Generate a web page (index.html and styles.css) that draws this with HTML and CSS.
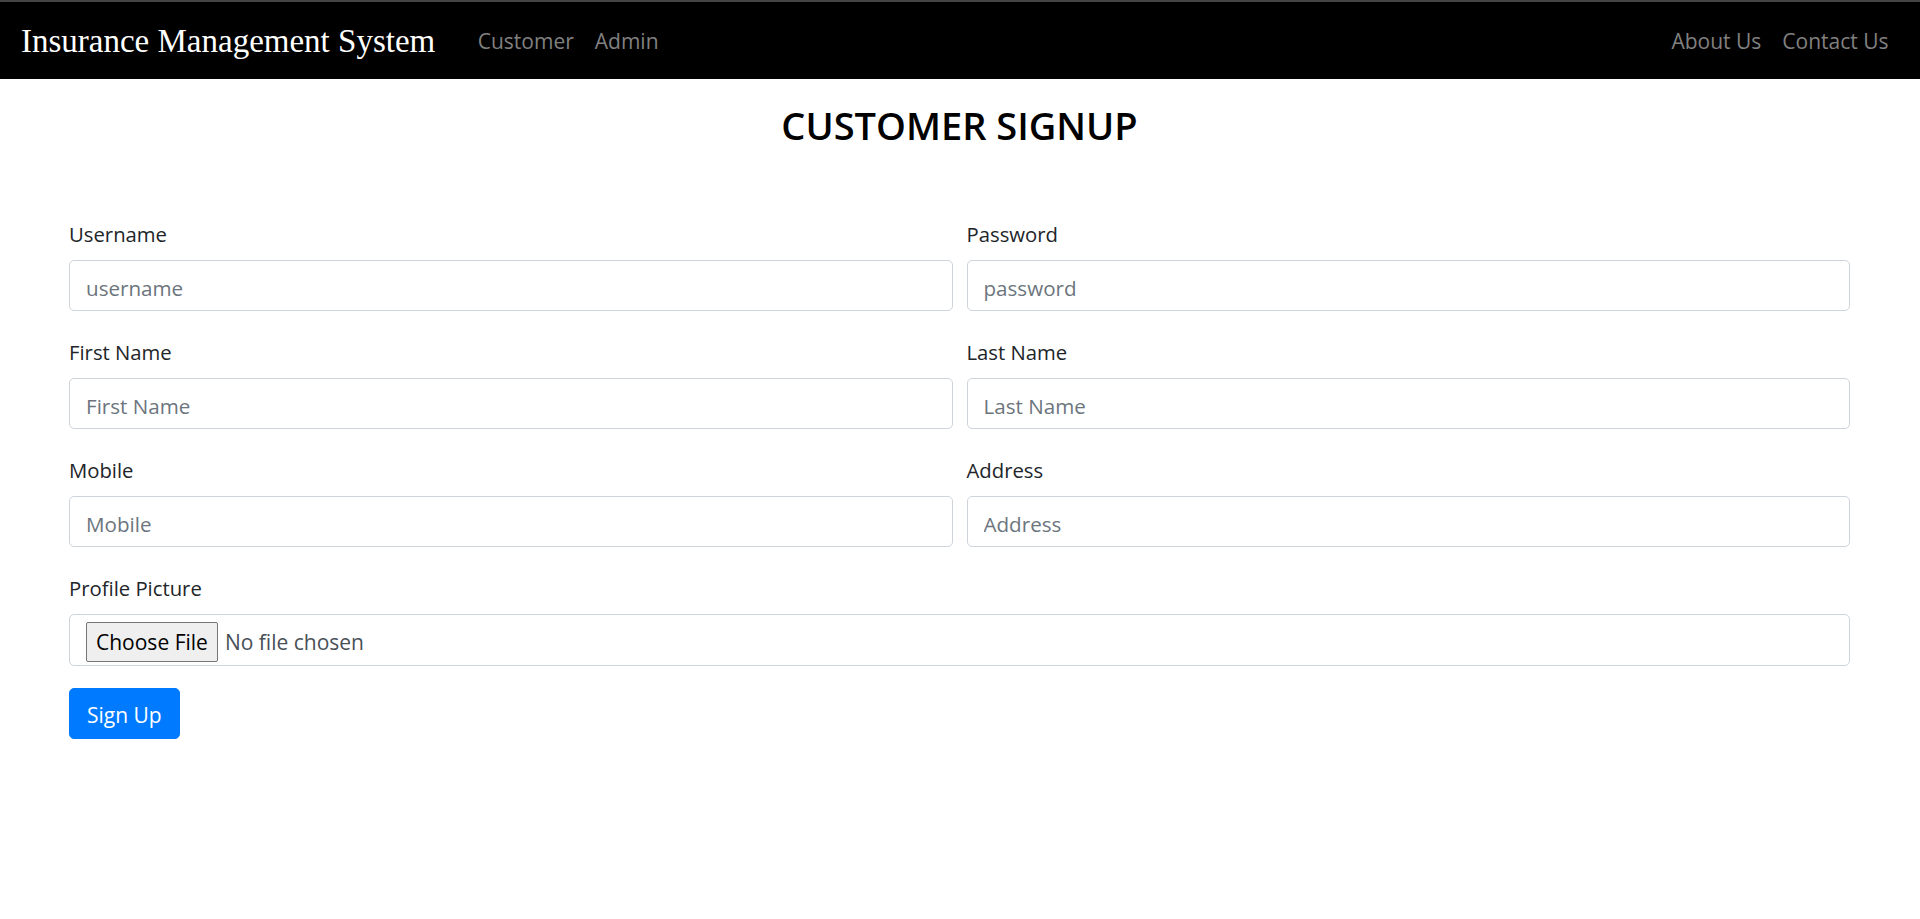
FILE: index.html
```html
<!DOCTYPE html>
<html lang="en">
<head>
<meta charset="utf-8">
<title>Customer Signup - Insurance Management System</title>
<link rel="stylesheet" href="styles.css">
</head>
<body>
<nav class="navbar">
  <a class="brand" href="#">Insurance Management System</a>
  <ul class="nav">
    <li><a class="nav-link" href="#">Customer</a></li>
    <li><a class="nav-link" href="#">Admin</a></li>
  </ul>
  <ul class="nav nav-right">
    <li><a class="nav-link" href="#">About Us</a></li>
    <li><a class="nav-link" href="#">Contact Us</a></li>
  </ul>
</nav>
<main class="page">
  <h3 class="title">CUSTOMER SIGNUP</h3>
  <form class="signup-form">
    <div class="form-row">
      <div class="form-group">
        <label for="username">Username</label>
        <input class="form-control" id="username" type="text" placeholder="username">
      </div>
      <div class="form-group">
        <label for="password">Password</label>
        <input class="form-control" id="password" type="password" placeholder="password">
      </div>
    </div>
    <div class="form-row">
      <div class="form-group">
        <label for="first_name">First Name</label>
        <input class="form-control" id="first_name" type="text" placeholder="First Name">
      </div>
      <div class="form-group">
        <label for="last_name">Last Name</label>
        <input class="form-control" id="last_name" type="text" placeholder="Last Name">
      </div>
    </div>
    <div class="form-row">
      <div class="form-group">
        <label for="mobile">Mobile</label>
        <input class="form-control" id="mobile" type="text" placeholder="Mobile">
      </div>
      <div class="form-group">
        <label for="address">Address</label>
        <input class="form-control" id="address" type="text" placeholder="Address">
      </div>
    </div>
    <div class="form-group form-group-last">
      <label for="profile_pic">Profile Picture</label>
      <input class="form-control file-control" id="profile_pic" type="file">
    </div>
    <button class="btn-primary" type="submit">Sign Up</button>
  </form>
</main>
</body>
</html>
```

FILE: styles.css
```css
* {
  box-sizing: border-box;
}

html, body {
  margin: 0;
  padding: 0;
  background: #fff;
}

body {
  font-family: "Open Sans", "Noto Sans", "Liberation Sans", sans-serif;
  font-size: 20px;
  line-height: 32px;
  color: #212529;
}

/* Navbar */
.navbar {
  display: flex;
  align-items: center;
  height: 79px;
  border-top: 2px solid #454545;
  background: #000;
  padding: 0 21px 0 21px;
}

.brand {
  font-family: "Liberation Serif", "Times New Roman", serif;
  font-size: 33px;
  color: #fff;
  text-decoration: none;
  white-space: nowrap;
  margin-right: 32px;
  line-height: 38px;
}

.nav {
  display: flex;
  list-style: none;
  margin: 0;
  padding: 0;
}

.nav-right {
  margin-left: auto;
}

.nav-link {
  display: block;
  padding: 0 10.5px;
  color: #808080;
  text-decoration: none;
  font-size: 21px;
  line-height: 32px;
}

/* Page */
.page {
  padding: 25px 70px 0 69px;
}

.title {
  margin: 0;
  text-align: center;
  font-size: 38px;
  line-height: 42px;
  font-weight: 600;
  color: #000;
}

.signup-form {
  margin-top: 72px;
}

.form-row {
  display: grid;
  grid-template-columns: 1fr 1fr;
  column-gap: 14px;
}

.form-group {
  margin-bottom: 25px;
}

.form-group-last {
  margin-bottom: 22px;
}

label {
  display: block;
  font-size: 20.3px;
  line-height: 32px;
  margin-bottom: 10px;
  color: #212529;
}

.form-control {
  display: block;
  width: 100%;
  height: 51px;
  padding: 4px 16px 0 16px;
  font-family: inherit;
  font-size: 20.6px;
  color: #495057;
  background: #fff;
  border: 1px solid #ced4da;
  border-radius: 5px;
  outline: none;
}

.form-control::placeholder {
  color: #6c757d;
  opacity: 1;
}

.file-control {
  height: 52px;
  padding: 7px 16px;
  color: #495057;
  font-size: 21px;
  line-height: 36px;
}

.file-control::file-selector-button {
  font-family: inherit;
  font-size: 21px;
  color: #000;
  background: #efefef;
  border: 1px solid #767676;
  border-radius: 2px;
  height: 40px;
  padding: 0 9px;
  margin-right: 7px;
}

.btn-primary {
  display: inline-block;
  height: 51px;
  padding: 2px 17px 0 17px;
  font-family: inherit;
  font-size: 21px;
  color: #fff;
  background: #007bff;
  border: 1px solid #007bff;
  border-radius: 5px;
  cursor: pointer;
}
```
